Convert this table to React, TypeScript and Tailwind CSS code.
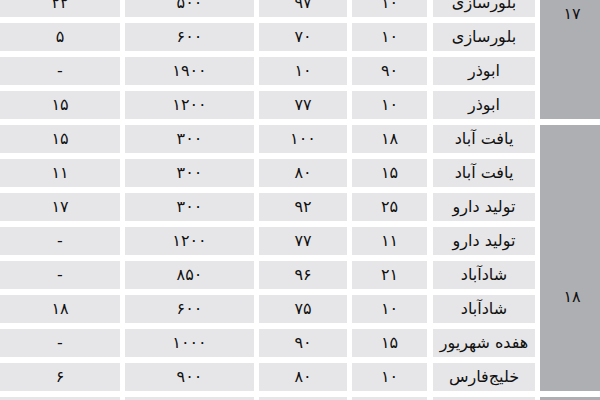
import React from "react";

type Row = [string, string, string, string, string];

const g17: Row[] = [
  ["۲۲", "۵۰۰", "۹۷", "۱۰", "بلورسازی"],
  ["۵", "۶۰۰", "۷۰", "۱۰", "بلورسازی"],
  ["-", "۱۹۰۰", "۱۰", "۹۰", "ابوذر"],
  ["۱۵", "۱۲۰۰", "۷۷", "۱۰", "ابوذر"],
];

const g18: Row[] = [
  ["۱۵", "۳۰۰", "۱۰۰", "۱۸", "یافت آباد"],
  ["۱۱", "۳۰۰", "۸۰", "۱۵", "یافت آباد"],
  ["۱۷", "۳۰۰", "۹۲", "۲۵", "تولید دارو"],
  ["-", "۱۲۰۰", "۷۷", "۱۱", "تولید دارو"],
  ["-", "۸۵۰", "۹۶", "۲۱", "شادآباد"],
  ["۱۸", "۶۰۰", "۷۵", "۱۰", "شادآباد"],
  ["-", "۱۰۰۰", "۹۰", "۱۵", "هفده شهریور"],
  ["۶", "۹۰۰", "۸۰", "۱۰", "خلیج‌فارس"],
];

const g19: Row[] = [["", "", "", "", ""]];

function RowView({ r }: { r: Row }) {
  return (
    <div className="flex gap-[5px]">
      <div className="w-[120px] h-[28px] bg-[#e6e6e8] flex items-center justify-center shrink-0">{r[0]}</div>
      <div className="w-[129px] h-[28px] bg-[#e6e6e8] flex items-center justify-center shrink-0">{r[1]}</div>
      <div className="w-[88px] h-[28px] bg-[#e6e6e8] flex items-center justify-center shrink-0">{r[2]}</div>
      <div className="w-[75px] h-[28px] bg-[#e6e6e8] flex items-center justify-center shrink-0 mr-[1px]">{r[3]}</div>
      <div className="w-[102px] h-[28px] bg-[#e6e6e8] flex items-center justify-center shrink-0" dir="rtl">{r[4]}</div>
    </div>
  );
}

function Group({ rows, label, pad }: { rows: Row[]; label: string; pad: string }) {
  return (
    <div className="flex gap-[5px]">
      <div className="flex flex-col gap-[6px]">
        {rows.map((r, i) => (
          <RowView key={i} r={r} />
        ))}
      </div>
      <div className={`w-[64px] bg-[#aeafb3] shrink-0 flex justify-center ${pad}`}>{label}</div>
    </div>
  );
}

export default function App() {
  return (
    <div
      className="w-[600px] h-[400px] overflow-hidden bg-white text-[#111111] text-[16px] leading-[20px]"
      style={{ fontFamily: '"DejaVu Sans", sans-serif' }}
    >
      <div className="w-[604px] mt-[-11px] flex flex-col gap-[6px]">
        <Group rows={g17} label="۱۷" pad="pt-[15px]" />
        <Group rows={g18} label="۱۸" pad="pt-[162px]" />
        <Group rows={g19} label="" pad="" />
      </div>
    </div>
  );
}
